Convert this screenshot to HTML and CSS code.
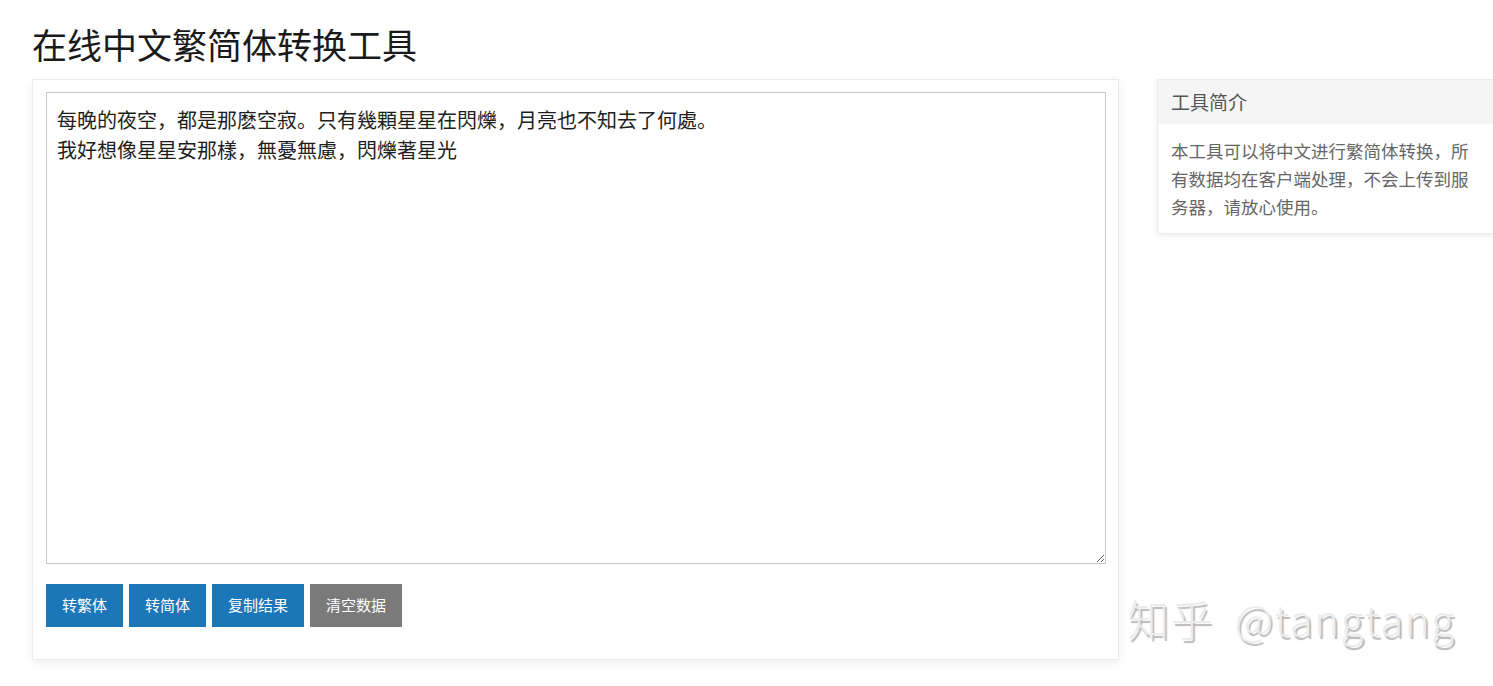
FILE: index.html
```html
<!DOCTYPE html>
<html lang="zh-CN">
<head>
<meta charset="utf-8">
<title>在线中文繁简体转换工具</title>
<link rel="stylesheet" href="styles.css">
</head>
<body>
<div class="page">
  <h1 class="title">在线中文繁简体转换工具</h1>
  <div class="row">
    <div class="main-card">
      <textarea class="editor">每晚的夜空，都是那麽空寂。只有幾顆星星在閃爍，月亮也不知去了何處。
我好想像星星安那樣，無憂無慮，閃爍著星光</textarea>
      <div class="actions">
        <button class="btn btn-blue">转繁体</button>
        <button class="btn btn-blue">转简体</button>
        <button class="btn btn-blue">复制结果</button>
        <button class="btn btn-grey">清空数据</button>
      </div>
    </div>
    <div class="side-card">
      <div class="side-head">工具简介</div>
      <div class="side-body">本工具可以将中文进行繁简体转换，所有数据均在客户端处理，不会上传到服务器，请放心使用。</div>
    </div>
  </div>
  <div class="watermark">知乎 @tangtang</div>
</div>
</body>
</html>
```

FILE: styles.css
```css
html, body {
  margin: 0;
  padding: 0;
  background: #fff;
  overflow: hidden;
}
body {
  font-family: "Noto Sans CJK SC", "Noto Sans", "Liberation Sans", sans-serif;
  color: #222;
  width: 1493px;
  height: 686px;
}
.page {
  position: relative;
  padding: 23px 0 0 32px;
}
.title {
  margin: 0 0 14px 0;
  font-size: 35px;
  line-height: 42px;
  font-weight: 400;
  color: #1a1a1a;
}
.row {
  display: flex;
  align-items: flex-start;
  gap: 38px;
}
.main-card {
  box-sizing: border-box;
  width: 1087px;
  height: 581px;
  flex: none;
  border: 1px solid #ececec;
  box-shadow: 0 3px 10px rgba(0,0,0,0.07);
  padding: 12px 13px 0 13px;
  background: #fff;
}
.editor {
  display: block;
  box-sizing: border-box;
  width: 1060px;
  height: 472px;
  margin: 0;
  border: 1px solid #c8c8c8;
  padding: 12px 10px;
  font-family: "Noto Sans CJK SC", "Noto Sans", sans-serif;
  font-size: 20px;
  line-height: 30px;
  color: #1e1e1e;
  resize: vertical;
  outline: none;
}
.actions {
  display: flex;
  gap: 6px;
  margin-top: 20px;
}
.btn {
  height: 43px;
  padding: 0 16px 2px;
  border: 0;
  border-radius: 0;
  font-family: "Noto Sans CJK SC", sans-serif;
  font-size: 15px;
  color: #fff;
  cursor: pointer;
}
.btn-blue { background: #1b77b8; }
.btn-grey { background: #7a7a7a; }
.side-card {
  box-sizing: border-box;
  width: 345px;
  flex: none;
  border: 1px solid #ececec;
  box-shadow: 0 2px 6px rgba(0,0,0,0.07);
  background: #fff;
}
.side-head {
  height: 44px;
  line-height: 44px;
  padding: 0 13px;
  background: #f5f5f5;
  font-size: 19px;
  color: #555;
}
.side-body {
  width: 312px;
  padding: 13px 13px 12px 13px;
  font-size: 17.5px;
  line-height: 28px;
  color: #666;
}
.watermark {
  position: absolute;
  left: 1127px;
  top: 588px;
  font-family: "Noto Sans CJK SC", "DejaVu Sans", sans-serif;
  font-size: 42px;
  font-weight: 300;
  line-height: 60px;
  word-spacing: 10px;
  letter-spacing: 1.5px;
  color: #ececec;
  text-shadow: 2px 3px 1px #b9b9b9;
  white-space: nowrap;
}
```
